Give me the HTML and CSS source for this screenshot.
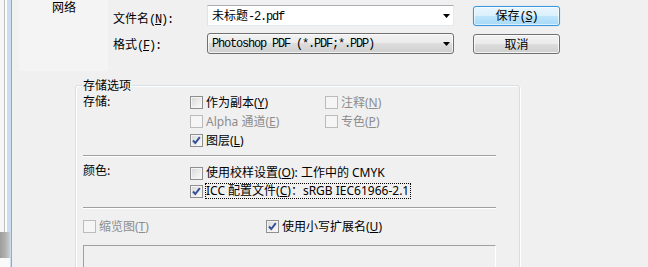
FILE: index.html
```html
<!DOCTYPE html>
<html lang="zh-CN">
<head>
<meta charset="utf-8">
<title>存储为</title>
<link rel="stylesheet" href="styles.css">
</head>
<body>
<div class="win">
  <div class="edge"><div class="grip"></div></div>
  <div class="main">
    <div class="top">
      <div class="nav"><div class="nav-item">网络</div></div>
      <div class="form">
        <div class="lbl lbl1">文件名<span class="m">(<u>N</u>):</span></div>
        <div class="combo edit">
          <span class="val">未标题<span class="m">-2.pdf</span></span>
          <svg class="arrow" width="7" height="4" viewBox="0 0 7 4"><polygon points="0,0 7,0 3.5,4" fill="#000"/></svg>
        </div>
        <button class="btn default">保存<span class="m">(<u>S</u>)</span></button>
        <div class="lbl">格式<span class="m">(<u>F</u>):</span></div>
        <div class="combo drop">
          <span class="val m">Photoshop PDF (*.PDF;*.PDP)</span>
          <svg class="arrow" width="7" height="4" viewBox="0 0 7 4"><polygon points="0,0 7,0 3.5,4" fill="#000"/></svg>
        </div>
        <button class="btn">取消</button>
      </div>
    </div>

    <fieldset class="group">
      <legend>存储选项</legend>

      <div class="sec sec1">
        <div class="slbl">存储:</div>
        <div class="cb"><span class="box"></span><span>作为副本(<u>Y</u>)</span></div>
        <div class="cb dis"><span class="box"></span><span>注释(<u>N</u>)</span></div>
        <div class="cb dis"><span class="box"></span><span>Alpha 通道(<u>E</u>)</span></div>
        <div class="cb dis"><span class="box"></span><span>专色(<u>P</u>)</span></div>
        <div class="cb"><span class="box on"><svg width="11" height="11" viewBox="0 0 11 11"><polyline points="2,5.5 4.3,8 8.8,2.2" fill="none" stroke="#34509a" stroke-width="2"/></svg></span><span>图层(<u>L</u>)</span></div>
      </div>

      <div class="sep"></div>

      <div class="sec sec2">
        <div class="slbl">颜色:</div>
        <div class="cb"><span class="box"></span><span>使用校样设置(<u>O</u>): 工作中的 CMYK</span></div>
        <div class="cb"><span class="box on"><svg width="11" height="11" viewBox="0 0 11 11"><polyline points="2,5.5 4.3,8 8.8,2.2" fill="none" stroke="#34509a" stroke-width="2"/></svg></span><span class="focus">ICC 配置文件(<u>C</u>)：sRGB IEC61966-2.1</span></div>
      </div>

      <div class="sep sep2"></div>

      <div class="sec sec3">
        <div class="cb dis"><span class="box"></span><span>缩览图(<u>T</u>)</span></div>
        <div class="cb"><span class="box on"><svg width="11" height="11" viewBox="0 0 11 11"><polyline points="2,5.5 4.3,8 8.8,2.2" fill="none" stroke="#34509a" stroke-width="2"/></svg></span><span>使用小写扩展名(<u>U</u>)</span></div>
      </div>

      <div class="well"></div>
    </fieldset>
  </div>
</div>
</body>
</html>
```

FILE: styles.css
```css
* { box-sizing: border-box; }
html, body { margin: 0; padding: 0; }
body {
  width: 648px;
  height: 267px;
  overflow: hidden;
  background: #f0f0f0;
  font-family: "Noto Sans", "Noto Sans CJK SC", sans-serif;
  font-size: 12px;
  color: #000;
}
u { text-decoration: underline; text-underline-offset: 1px; }

.win { display: flex; height: 267px; }

.edge {
  width: 12px;
  flex: none;
  background: linear-gradient(to right, #f7f7f7 0 4px, #bdbdbd 4px 5px, #fdfdfd 5px 7px, #cadcf0 7px 11px, #9aa9b9 11px 12px);
}
.grip {
  margin-top: 232px;
  width: 10px;
  height: 26px;
  background: linear-gradient(to right, #9c9c9c, #b4b4b4 60%, #cfcfcf);
  box-shadow: 0 9px 0 #fafafa;
}

.main { flex: 1; display: flex; flex-direction: column; min-width: 0; }

.top { display: flex; height: 71px; flex: none; }
.nav {
  width: 89px;
  margin-left: 7px;
  background: #f4f4f4;
  padding-left: 33px;
}
.nav-item { line-height: 13px; font-family: "Noto Sans CJK SC", sans-serif; }

.form {
  margin-left: 5px;
  padding-top: 5px;
  display: grid;
  grid-template-columns: 94px 247px 87px;
  grid-auto-rows: 21px;
  row-gap: 7px;
  align-content: start;
}
.lbl {
  font-family: "Noto Sans CJK SC", sans-serif;
  line-height: 21px;
}
.lbl1 { padding-top: 2px; }
.m {
  font-family: "Liberation Mono", "DejaVu Sans Mono", monospace;
  letter-spacing: -1.2px;
}
.combo {
  display: flex;
  align-items: center;
  padding: 0 3px 0 4px;
  font-family: "Noto Sans CJK SC", sans-serif;
}
.combo .val { line-height: 14px; white-space: nowrap; }
.combo .val.m { font-family: "Liberation Mono", "DejaVu Sans Mono", monospace; }
.combo .arrow { margin-left: auto; flex: none; }
.edit {
  background: #fff;
  border: 1px solid;
  border-color: #abadb3 #e3e9ef #e3e9ef #e2e3ea;
}
.drop {
  border: 1px solid #707070;
  border-radius: 3px;
  background: linear-gradient(#f2f2f2 0%, #ebebeb 50%, #dddddd 50%, #cfcfcf 100%);
  box-shadow: inset 0 0 0 1px rgba(255,255,255,0.7);
}

.btn {
  margin-left: 19px;
  width: 87px;
  height: 20px;
  align-self: end;
  padding: 0;
  font: inherit;
  font-family: "Noto Sans CJK SC", sans-serif;
  line-height: 16px;
  color: #000;
  border: 1px solid #707070;
  border-radius: 3px;
  background: linear-gradient(#f2f2f2 0%, #ebebeb 50%, #dddddd 50%, #cfcfcf 100%);
  box-shadow: inset 0 0 0 1px rgba(255,255,255,0.75);
}
.btn.default {
  border-color: #3a97dd;
  background: linear-gradient(#eaf6fd 0%, #d9f0fc 50%, #bee6fd 50%, #a7d9f5 100%);
  box-shadow: inset 0 0 0 1px rgba(255,255,255,0.6), 0 0 1px #6ec3f2;
}

.group {
  margin: 6px 0 0 63px;
  width: 445px;
  height: 300px;
  flex: none;
  padding: 0 23px 0 7px;
  border: 1px solid #d5dfe5;
  border-radius: 3px;
  box-shadow: inset 1px 1px 0 #fff, 1px 1px 0 #fff;
  min-width: 0;
}
.group legend {
  padding: 0 1px;
  margin-left: -1px;
  line-height: 16px;
  font-family: "Noto Sans CJK SC", sans-serif;
}

.sec { display: grid; }
.sec1 {
  grid-template-columns: 107px 135px 1fr;
  grid-auto-rows: 19px;
}
.sec1 .slbl { grid-row: span 3; }
.sec2 {
  margin-top: 7px;
  grid-template-columns: 107px 1fr;
  grid-auto-rows: 18px;
}
.sec2 .slbl { grid-row: span 2; margin-top: -2px; }
.sec3 {
  margin-top: 8px;
  grid-template-columns: 183px 1fr;
  grid-auto-rows: 19px;
}
.slbl { line-height: 16px; font-family: "Noto Sans CJK SC", sans-serif; }

.cb {
  display: flex;
  align-items: center;
  gap: 3px;
  white-space: nowrap;
  line-height: 16px;
}
.box {
  width: 13px;
  height: 13px;
  flex: none;
  border: 1px solid #8f8f8f;
  background: linear-gradient(135deg, #d6d6d6 0%, #ececec 55%, #fcfcfc 100%);
  box-shadow: inset 0 0 0 1px #f4f4f4;
  display: flex;
  align-items: center;
  justify-content: center;
}
.box svg { display: block; }
.dis { color: #8d8d8d; }
.dis .box {
  border-color: #bcbcbc;
  background: #f5f5f5;
  box-shadow: none;
}
.focus {
  border: 1px dotted #000;
  line-height: 14px;
  padding: 0 1px 0 0;
  margin-left: -1px;
}

.sep {
  height: 2px;
  margin-top: 5px;
  border-top: 1px solid #a0a0a0;
  border-bottom: 1px solid #fff;
}
.sep2 { margin-top: 7px; }

.well {
  margin-top: 9px;
  height: 60px;
  border: 1px solid;
  border-color: #a0a0a0 #fff #fff #a0a0a0;
}
```
